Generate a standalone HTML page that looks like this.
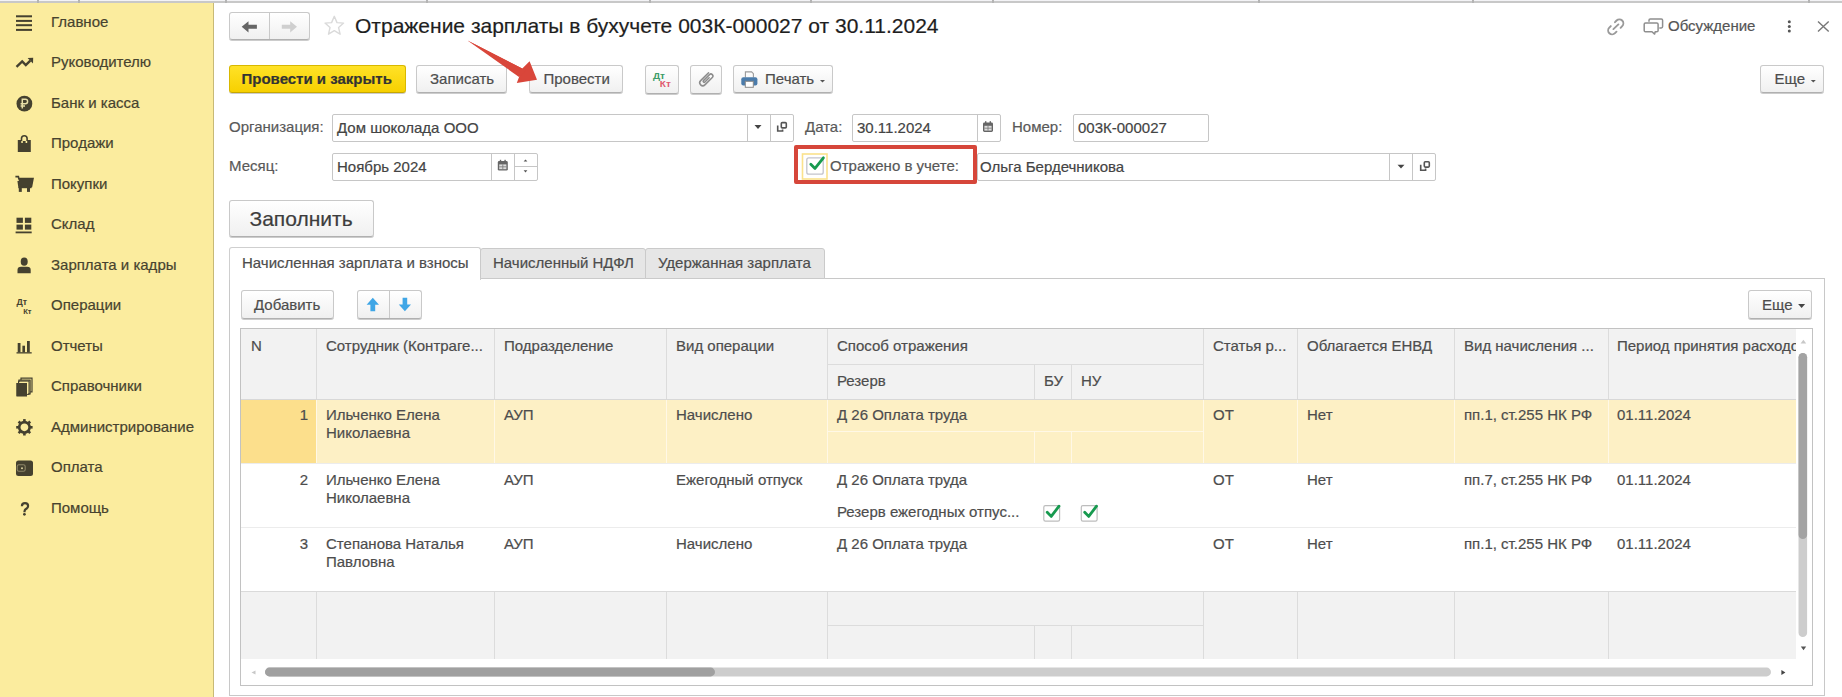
<!DOCTYPE html><html><head><meta charset="utf-8"><style>
*{box-sizing:border-box;margin:0;padding:0}
html,body{width:1842px;height:697px;overflow:hidden;background:#fff;font-family:"Liberation Sans",sans-serif;font-size:15px;color:#4d4d4d}
.a{position:absolute}
.t{position:absolute;white-space:nowrap;line-height:18px;font-size:15px}
.tick{position:absolute;top:0;width:2px;height:3px;background:#b4b4b4}
.si{position:absolute;left:51px;color:#47432f;font-size:15px;line-height:18px;white-space:nowrap}
.btn{position:absolute;border:1px solid #c9c9c9;border-bottom-color:#b0b0b0;border-radius:3px;background:linear-gradient(#ffffff,#f0f0f0);box-shadow:0 1px 0 rgba(0,0,0,.20);color:#4d4d4d;font-size:15px;white-space:nowrap}
.inp{position:absolute;border:1px solid #c6c6c6;border-radius:2px;background:#fff}
.lbl{position:absolute;color:#595959;font-size:15px;line-height:18px;white-space:nowrap}
.txt{position:absolute;color:#444;font-size:15px;line-height:18px;white-space:nowrap}
.vd{position:absolute;width:1px}
.hd{position:absolute;height:1px}
svg{position:absolute;overflow:visible}
div{-webkit-text-stroke:0.2px currentColor}
</style></head><body>
<div class="a" style="left:0;top:0;width:1842px;height:1px;background:#f3f3f6"></div>
<div class="a" style="left:0;top:1px;width:1842px;height:2px;background:#c8c8c8"></div>
<div class="tick" style="left:37px"></div>
<div class="tick" style="left:78px"></div>
<div class="tick" style="left:225px"></div>
<div class="tick" style="left:426px"></div>
<div class="tick" style="left:649px"></div>
<div class="tick" style="left:810px"></div>
<div class="tick" style="left:992px"></div>
<div class="tick" style="left:1258px"></div>
<div class="tick" style="left:1472px"></div>
<div class="tick" style="left:1808px"></div>
<div class="a" style="left:0;top:3px;width:213px;height:694px;background:#fbec9e"></div>
<div class="a" style="left:213px;top:3px;width:1px;height:694px;background:#c8ba76"></div>
<div class="si" style="top:13px">Главное</div>
<div class="si" style="top:53px">Руководителю</div>
<div class="si" style="top:94px">Банк и касса</div>
<div class="si" style="top:134px">Продажи</div>
<div class="si" style="top:175px">Покупки</div>
<div class="si" style="top:215px">Склад</div>
<div class="si" style="top:256px">Зарплата и кадры</div>
<div class="si" style="top:296px">Операции</div>
<div class="si" style="top:337px">Отчеты</div>
<div class="si" style="top:377px">Справочники</div>
<div class="si" style="top:418px">Администрирование</div>
<div class="si" style="top:458px">Оплата</div>
<div class="si" style="top:499px">Помощь</div>
<svg style="left:0;top:0" width="214" height="697" viewBox="0 0 214 697">
<g fill="#45412f">
<rect x="16" y="15.3" width="16" height="2"/><rect x="16" y="19.9" width="16" height="2"/><rect x="16" y="24.2" width="16" height="2"/><rect x="16" y="28.9" width="16" height="2"/>
</g>
<polyline points="16.5,66.9 22.2,61.5 25.8,65.1 30.3,60.6" fill="none" stroke="#45412f" stroke-width="2.4" stroke-linejoin="miter"/>
<polygon points="27.6,58 33.2,57.8 33,63.4" fill="#45412f"/>
<circle cx="24.4" cy="103.7" r="7.9" fill="#45412f"/>
<path d="M22.3,108.5 V99.3 H25.4 A2.2,2.2 0 0 1 25.4,103.7 H20.6 M20.6,105.9 H25" fill="none" stroke="#e8dfa8" stroke-width="1.5"/>
<path d="M17.8,140 H21.3 V143 H22.8 V141 H25.6 V143 H27.2 V140 H30.8 V152 H17.8 Z" fill="#45412f"/>
<path d="M21.5,141 V138.5 A2.8,2.8 0 0 1 27.1,138.5 V141" fill="none" stroke="#45412f" stroke-width="1.6"/>
<path d="M15.4,176.6 H18.4 L18.8,178.6 H33 L31.5,186.5 H19 L18.2,181" fill="none" stroke="#45412f" stroke-width="1.6"/>
<path d="M18.6,178.6 H33 L31.5,186.5 H19.2 Z" fill="#45412f"/>
<rect x="18.3" y="187" width="13.2" height="1.2" fill="#45412f"/>
<rect x="18.8" y="188" width="3" height="3.9" fill="#45412f"/><rect x="27" y="188" width="3" height="3.9" fill="#45412f"/>
<g fill="#45412f"><rect x="16.5" y="217.7" width="6.4" height="5.2"/><rect x="24.9" y="217.7" width="6.4" height="5.2"/><rect x="16.5" y="224.6" width="6.4" height="5"/><rect x="24.9" y="224.6" width="6.4" height="5"/><rect x="15.6" y="231.5" width="16.1" height="1.8"/></g>
<ellipse cx="24.2" cy="261.7" rx="3.5" ry="4.1" fill="#45412f"/>
<path d="M17.5,273.2 V270 Q17.5,266.8 21,266.8 H27.2 Q30.7,266.8 30.7,270 V273.2 Z" fill="#45412f"/>
<text x="16.4" y="304.6" font-family="Liberation Sans" font-weight="bold" font-size="8.8" fill="#45412f">Дт</text>
<text x="23.2" y="314.2" font-family="Liberation Sans" font-weight="bold" font-size="8" fill="#45412f" textLength="8.4" lengthAdjust="spacingAndGlyphs">Кт</text>
<g fill="#45412f"><rect x="17.7" y="343" width="2.8" height="9.4"/><rect x="22.4" y="345.7" width="2.6" height="6.7"/><rect x="27" y="341" width="2.8" height="11.4"/><rect x="16.5" y="352.2" width="15.2" height="1.3"/></g>
<g fill="none" stroke="#45412f" stroke-width="1.2"><path d="M19,382.3 V380.1 H30.1 V393.8 H28.2"/><path d="M21,380.3 V378.2 H32 V391.8 H30.2"/></g>
<rect x="16.5" y="383" width="10.5" height="13.3" fill="#45412f"/>
<rect x="18.5" y="381.1" width="10.5" height="13.3" fill="none" stroke="#45412f" stroke-width="1"/>
<rect x="16.5" y="383" width="10.5" height="13.3" fill="#45412f"/>
<g transform="translate(24.4,427.3)">
<circle r="5.2" fill="none" stroke="#45412f" stroke-width="2.6"/>
<g fill="#45412f">
<rect x="-1.3" y="-8.2" width="2.6" height="3.5"/><rect x="-1.3" y="4.7" width="2.6" height="3.5"/>
<rect x="-8.2" y="-1.3" width="3.5" height="2.6"/><rect x="4.7" y="-1.3" width="3.5" height="2.6"/>
<g transform="rotate(45)"><rect x="-1.3" y="-8.2" width="2.6" height="3.5"/><rect x="-1.3" y="4.7" width="2.6" height="3.5"/><rect x="-8.2" y="-1.3" width="3.5" height="2.6"/><rect x="4.7" y="-1.3" width="3.5" height="2.6"/></g>
</g></g>
<rect x="16" y="460.5" width="17" height="15.5" rx="2.5" fill="#45412f"/>
<rect x="17.2" y="464.8" width="8" height="6.4" rx="1.8" fill="none" stroke="#8d8668" stroke-width="1.1"/>
<circle cx="22" cy="468.3" r="1" fill="#d8d0a0"/>
<path d="M21.9,506.2 Q21.9,503.1 25,503.1 Q28.1,503.1 28.1,506 Q28.1,507.7 26.3,508.7 Q24.5,509.7 24.5,511.6 V512.2" fill="none" stroke="#45412f" stroke-width="2.2"/><circle cx="24.4" cy="514.3" r="1.4" fill="#45412f"/>
</svg>
<div class="btn" style="left:229px;top:12px;width:81px;height:28px"></div>
<div class="a" style="left:269px;top:13px;width:1px;height:26px;background:#c9c9c9"></div>
<svg style="left:0;top:0" width="1842" height="100" viewBox="0 0 1842 100">
<path d="M241.7,26.8 L248.5,21.3 V24.8 H256.9 V28.8 H248.5 V32.4 Z" fill="#666"/>
<path d="M297,26.8 L290.2,21.3 V24.8 H281.8 V28.8 H290.2 V32.4 Z" fill="#cfcfcf"/>
<path d="M334.3,16.3 L337,22.6 L343.6,23.1 L338.6,27.6 L340.1,34.2 L334.3,30.7 L328.5,34.2 L330,27.6 L325,23.1 L331.6,22.6 Z" fill="none" stroke="#dadada" stroke-width="1.4" stroke-linejoin="round"/>
</svg>
<div class="t" style="left:355px;top:14px;font-size:21px;line-height:24px;color:#1e1e1e">Отражение зарплаты в бухучете 003К-000027 от 30.11.2024</div>
<svg style="left:0;top:0" width="1842" height="60" viewBox="0 0 1842 60">
<g fill="none" stroke="#9a9a9a" stroke-width="1.9" stroke-linecap="round">
<path d="M1615,22.2 L1616.6,20.5 A3.96,3.96 0 0 1 1622.2,26.1 L1620.6,27.8"/>
<path d="M1610.8,26.1 L1609.3,27.6 A3.96,3.96 0 0 0 1615,33.2 L1616.5,31.7"/>
<path d="M1613.4,29.1 L1618.4,24.4"/>
</g>
<g fill="none" stroke="#8f8f8f" stroke-width="1.5" stroke-linejoin="round">
<path d="M1649,21.8 V20.2 Q1649,18.9 1650.3,18.9 H1661.3 Q1662.6,18.9 1662.6,20.2 V26.6 Q1662.6,27.9 1661.3,27.9 H1659.3"/>
<path d="M1645.5,22.9 H1656.8 Q1658.1,22.9 1658.1,24.2 V30.4 Q1658.1,31.7 1656.8,31.7 H1655.2 L1654.6,34.1 L1652,31.7 H1645.5 Q1644.2,31.7 1644.2,30.4 V24.2 Q1644.2,22.9 1645.5,22.9 Z" fill="#fff"/>
</g>
<g fill="#555"><circle cx="1789.3" cy="21.8" r="1.5"/><circle cx="1789.3" cy="26.5" r="1.5"/><circle cx="1789.3" cy="31.1" r="1.5"/></g>
<path d="M1818,21.5 L1828.7,31.6 M1828.7,21.5 L1818,31.6" stroke="#777" stroke-width="1.4"/>
</svg>
<div class="t" style="left:1668px;top:17px;color:#555">Обсуждение</div>
<div class="btn" style="left:229px;top:65px;width:177px;height:28px;background:linear-gradient(#ffe227,#f7d000);border-color:#d8b800;border-bottom-color:#c7a700;font-weight:bold;color:#333;padding-left:11.5px;line-height:26px">Провести и закрыть</div>
<div class="btn" style="left:416px;top:65px;width:91px;height:28px;padding-left:13px;line-height:26px">Записать</div>
<div class="btn" style="left:529px;top:65px;width:94px;height:28px;padding-left:13.5px;line-height:26px">Провести</div>
<div class="btn" style="left:645px;top:65px;width:34px;height:29px"></div>
<div class="btn" style="left:690px;top:65px;width:32px;height:29px"></div>
<div class="btn" style="left:733px;top:65px;width:100px;height:28px;padding-left:31px;line-height:26px">Печать</div>
<div class="btn" style="left:1760px;top:65px;width:64px;height:28px;padding-left:13.5px;line-height:26px">Еще</div>
<svg style="left:0;top:0" width="1842" height="100" viewBox="0 0 1842 100">
<text x="653" y="78.6" font-family="Liberation Sans" font-weight="bold" font-size="8.8" fill="#3c9c68" textLength="12" lengthAdjust="spacingAndGlyphs">Дт</text>
<text x="659.8" y="87.4" font-family="Liberation Sans" font-weight="bold" font-size="8.6" fill="#e05a70" textLength="11" lengthAdjust="spacingAndGlyphs">Кт</text>
<path transform="translate(706.3,79.2) rotate(-45)" d="M6.2,-3 L-5,-3 A3,3 0 0 0 -5,3 L5.5,3 A2,2 0 0 0 5.5,-1 L-3,-1 A1,1 0 0 0 -3,1 L3,1" fill="none" stroke="#8c8c8c" stroke-width="1.5" stroke-linecap="round"/>
<path d="M745.4,77.5 V71.9 H751.6 L753.4,73.7 V77.5" fill="none" stroke="#9a9a9a" stroke-width="1.1"/>
<rect x="741.3" y="77.3" width="16.1" height="8.3" rx="2" fill="#4b7cab"/>
<rect x="745.3" y="81.3" width="8" height="6" fill="#fff" stroke="#8a8a8a" stroke-width="1"/>
<path d="M820,79.9 H825 L822.5,82.4 Z" fill="#555"/>
<path d="M1810.8,79.9 H1815.8 L1813.3,82.4 Z" fill="#555"/>
</svg>
<svg style="left:0;top:0" width="1842" height="120" viewBox="0 0 1842 120">
<path d="M467.5,40.5 L522.3,68.6 L529.6,61.2 L537,79.8 L516.8,83 L520.5,73.2 Z" fill="#d9463a"/>
<path d="M467.5,40.5 L526,70.5 L519,77 Z" fill="#d9463a"/>
</svg>
<div class="lbl" style="left:229px;top:118px">Организация:</div>
<div class="inp" style="left:332px;top:114px;width:462px;height:28px"></div>
<div class="vd" style="left:747px;top:115px;height:26px;background:#c6c6c6"></div>
<div class="vd" style="left:770px;top:115px;height:26px;background:#c6c6c6"></div>
<div class="txt" style="left:337px;top:119px">Дом шоколада ООО</div>
<div class="lbl" style="left:805px;top:118px">Дата:</div>
<div class="inp" style="left:852px;top:114px;width:149px;height:28px"></div>
<div class="vd" style="left:977px;top:115px;height:26px;background:#c6c6c6"></div>
<div class="txt" style="left:857px;top:119px">30.11.2024</div>
<div class="lbl" style="left:1012px;top:118px">Номер:</div>
<div class="inp" style="left:1073px;top:114px;width:136px;height:28px"></div>
<div class="txt" style="left:1078px;top:119px">003К-000027</div>
<div class="lbl" style="left:229px;top:157px">Месяц:</div>
<div class="inp" style="left:332px;top:153px;width:206px;height:28px"></div>
<div class="vd" style="left:491px;top:154px;height:26px;background:#c6c6c6"></div>
<div class="vd" style="left:514px;top:154px;height:26px;background:#c6c6c6"></div>
<div class="a" style="left:515px;top:166px;width:22px;height:1px;background:#c6c6c6"></div>
<div class="txt" style="left:337px;top:158px">Ноябрь 2024</div>
<div class="inp" style="left:977px;top:153px;width:459px;height:28px"></div>
<div class="vd" style="left:1389px;top:154px;height:26px;background:#c6c6c6"></div>
<div class="vd" style="left:1412px;top:154px;height:26px;background:#c6c6c6"></div>
<div class="txt" style="left:980px;top:158px">Ольга Бердечникова</div>
<div class="a" style="left:794px;top:145px;width:183px;height:39px;border:4px solid #d6463a;border-radius:2px"></div>
<div class="lbl" style="left:830px;top:157px;color:#575757">Отражено в учете:</div>
<svg style="left:0;top:0" width="1842" height="200" viewBox="0 0 1842 200"><path d="M754.5,125.1 H761.5 L758,128.9 Z" fill="#444"/><rect x="781.3000000000001" y="122.60000000000001" width="5" height="5.3" rx="1" fill="none" stroke="#555" stroke-width="1.6"/><path d="M777.7,125.60000000000001 V131.0 H782.6 V129.4" fill="none" stroke="#555" stroke-width="1.6"/><rect x="983" y="122.4" width="10" height="9.6" rx="1.4" fill="#666"/><rect x="984.4" y="125.8" width="7.2" height="4.8" fill="#ddd"/><path d="M984.4,128.2 H991.6 M988,125.8 V130.6" stroke="#777" stroke-width="0.8"/><rect x="985" y="121.2" width="1.4" height="2.2" fill="#666"/><rect x="989.6" y="121.2" width="1.4" height="2.2" fill="#666"/><rect x="497.8" y="161.0" width="10" height="9.6" rx="1.4" fill="#666"/><rect x="499.2" y="164.4" width="7.2" height="4.8" fill="#ddd"/><path d="M499.2,166.8 H506.40000000000003 M502.8,164.4 V169.20000000000002" stroke="#777" stroke-width="0.8"/><rect x="499.8" y="159.8" width="1.4" height="2.2" fill="#666"/><rect x="504.40000000000003" y="159.8" width="1.4" height="2.2" fill="#666"/><path d="M523.6,161.6 H527.4 L525.5,159.4 Z" fill="#555"/><path d="M523.6,170.2 H527.4 L525.5,172.4 Z" fill="#555"/><path d="M1397.5,164.7 H1404.5 L1401,168.5 Z" fill="#444"/><rect x="1424.3" y="161.79999999999998" width="5" height="5.3" rx="1" fill="none" stroke="#555" stroke-width="1.6"/><path d="M1420.7,164.79999999999998 V170.2 H1425.6000000000001 V168.6" fill="none" stroke="#555" stroke-width="1.6"/><rect x="802.5" y="154" width="24.5" height="25" fill="none" stroke="#fbe28c" stroke-width="1.6"/><rect x="806.8" y="157.8" width="16.4" height="16.4" rx="2" fill="#fff" stroke="#c4c4cc" stroke-width="1.3"/><path d="M810.8,164.2 L815,168.4 L823.4,157.8" fill="none" stroke="#179a4f" stroke-width="2.8" stroke-linecap="round" stroke-linejoin="round"/></svg>
<div class="btn" style="left:229px;top:200px;width:145px;height:37px;font-size:21px;line-height:35px;padding-left:19.5px;color:#3d3d3d">Заполнить</div>
<div class="a" style="left:229px;top:278px;width:1596px;height:418px;border:1px solid #c8c8c8"></div>
<div class="a" style="left:229px;top:247px;width:252px;height:33px;border:1px solid #cfcfcf;border-bottom:none;background:#fff;border-radius:3px 3px 0 0"></div>
<div class="t" style="left:242px;top:254px">Начисленная зарплата и взносы</div>
<div class="a" style="left:480px;top:248px;width:166px;height:31px;border:1px solid #cacaca;background:#e6e6e6;border-radius:3px 3px 0 0"></div>
<div class="t" style="left:493px;top:254px">Начисленный НДФЛ</div>
<div class="a" style="left:645px;top:248px;width:180px;height:31px;border:1px solid #cacaca;background:#e6e6e6;border-radius:3px 3px 0 0"></div>
<div class="t" style="left:658px;top:254px">Удержанная зарплата</div>
<div class="btn" style="left:241px;top:290px;width:93px;height:29px;padding-left:12px;line-height:27px">Добавить</div>
<div class="btn" style="left:357px;top:290px;width:65px;height:29px"></div>
<div class="vd" style="left:389px;top:291px;height:27px;background:#c9c9c9"></div>
<div class="btn" style="left:1748px;top:290px;width:64px;height:29px;padding-left:13px;line-height:27px">Еще</div>
<svg style="left:0;top:0" width="1842" height="330" viewBox="0 0 1842 330">
<path d="M372.8,297.8 L379,304.8 H375.2 V311.2 H370.4 V304.8 H366.6 Z" fill="#3fa6e6"/>
<path d="M404.9,311.2 L411,304.6 H407.2 V297.8 H402.6 V304.6 H398.8 Z" fill="#3fa6e6"/>
<path d="M1798.1,304.1 H1805.1 L1801.6,307.9 Z" fill="#444"/></svg>
<div class="a" style="left:240px;top:328px;width:1573px;height:358px;border:1px solid #c2c2c2;background:#fff"></div>
<div class="a" style="left:241px;top:329px;width:1555px;height:70px;background:#f2f2f2"></div>
<div class="vd" style="left:316px;top:329px;height:70px;background:#dcdcdc"></div>
<div class="vd" style="left:494px;top:329px;height:70px;background:#dcdcdc"></div>
<div class="vd" style="left:666px;top:329px;height:70px;background:#dcdcdc"></div>
<div class="vd" style="left:827px;top:329px;height:70px;background:#dcdcdc"></div>
<div class="vd" style="left:1203px;top:329px;height:70px;background:#dcdcdc"></div>
<div class="vd" style="left:1297px;top:329px;height:70px;background:#dcdcdc"></div>
<div class="vd" style="left:1454px;top:329px;height:70px;background:#dcdcdc"></div>
<div class="vd" style="left:1608px;top:329px;height:70px;background:#dcdcdc"></div>
<div class="hd" style="left:827px;top:364px;width:376px;background:#dcdcdc"></div>
<div class="vd" style="left:1034px;top:365px;height:34px;background:#dcdcdc"></div>
<div class="vd" style="left:1071px;top:365px;height:34px;background:#dcdcdc"></div>
<div class="hd" style="left:241px;top:399px;width:1555px;background:#d8d8d8"></div>
<div class="a" style="left:241px;top:400px;width:1555px;height:63px;background:#fdf0c5"></div>
<div class="a" style="left:241px;top:400px;width:75px;height:63px;background:#fcdf8c"></div>
<div class="vd" style="left:316px;top:400px;height:63px;background:#fff8e6"></div>
<div class="vd" style="left:494px;top:400px;height:63px;background:#fff8e6"></div>
<div class="vd" style="left:666px;top:400px;height:63px;background:#fff8e6"></div>
<div class="vd" style="left:827px;top:400px;height:63px;background:#fff8e6"></div>
<div class="vd" style="left:1203px;top:400px;height:63px;background:#fff8e6"></div>
<div class="vd" style="left:1297px;top:400px;height:63px;background:#fff8e6"></div>
<div class="vd" style="left:1454px;top:400px;height:63px;background:#fff8e6"></div>
<div class="vd" style="left:1608px;top:400px;height:63px;background:#fff8e6"></div>
<div class="hd" style="left:827px;top:431px;width:376px;background:#fff8e6"></div>
<div class="vd" style="left:1034px;top:432px;height:31px;background:#fff8e6"></div>
<div class="vd" style="left:1071px;top:432px;height:31px;background:#fff8e6"></div>
<div class="hd" style="left:241px;top:463px;width:1555px;background:#ececec"></div>
<div class="hd" style="left:241px;top:527px;width:1555px;background:#ececec"></div>
<div class="hd" style="left:241px;top:591px;width:1555px;background:#dadada"></div>
<div class="a" style="left:241px;top:592px;width:1555px;height:67px;background:#f2f2f2"></div>
<div class="vd" style="left:316px;top:592px;height:67px;background:#dcdcdc"></div>
<div class="vd" style="left:494px;top:592px;height:67px;background:#dcdcdc"></div>
<div class="vd" style="left:666px;top:592px;height:67px;background:#dcdcdc"></div>
<div class="vd" style="left:827px;top:592px;height:67px;background:#dcdcdc"></div>
<div class="vd" style="left:1203px;top:592px;height:67px;background:#dcdcdc"></div>
<div class="vd" style="left:1297px;top:592px;height:67px;background:#dcdcdc"></div>
<div class="vd" style="left:1454px;top:592px;height:67px;background:#dcdcdc"></div>
<div class="vd" style="left:1608px;top:592px;height:67px;background:#dcdcdc"></div>
<div class="hd" style="left:827px;top:625px;width:376px;background:#dcdcdc"></div>
<div class="vd" style="left:1034px;top:626px;height:33px;background:#dcdcdc"></div>
<div class="vd" style="left:1071px;top:626px;height:33px;background:#dcdcdc"></div>
<div class="txt" style="left:251px;top:337px;color:#4d4d4d;">N</div>
<div class="txt" style="left:326px;top:337px;color:#4d4d4d;">Сотрудник (Контраге...</div>
<div class="txt" style="left:504px;top:337px;color:#4d4d4d;">Подразделение</div>
<div class="txt" style="left:676px;top:337px;color:#4d4d4d;">Вид операции</div>
<div class="txt" style="left:837px;top:337px;color:#4d4d4d;">Способ отражения</div>
<div class="txt" style="left:1213px;top:337px;color:#4d4d4d;">Статья р...</div>
<div class="txt" style="left:1307px;top:337px;color:#4d4d4d;">Облагается ЕНВД</div>
<div class="txt" style="left:1464px;top:337px;color:#4d4d4d;">Вид начисления ...</div>
<div class="a" style="left:1617px;top:337px;width:179px;height:20px;overflow:hidden"><div class="txt" style="left:0;top:0;color:#4d4d4d">Период принятия расходов</div></div>
<div class="txt" style="left:837px;top:372px;color:#4d4d4d;">Резерв</div>
<div class="txt" style="left:1044px;top:372px;color:#4d4d4d;">БУ</div>
<div class="txt" style="left:1081px;top:372px;color:#4d4d4d;">НУ</div>
<div class="txt" style="left:251px;top:406px;width:57px;text-align:right;color:#4d4d4d">1</div>
<div class="txt" style="left:326px;top:406px;color:#4d4d4d;">Ильченко Елена</div>
<div class="txt" style="left:326px;top:424px;color:#4d4d4d;">Николаевна</div>
<div class="txt" style="left:504px;top:406px;color:#4d4d4d;">АУП</div>
<div class="txt" style="left:676px;top:406px;color:#4d4d4d;">Начислено</div>
<div class="txt" style="left:837px;top:406px;color:#4d4d4d;">Д 26 Оплата труда</div>
<div class="txt" style="left:1213px;top:406px;color:#4d4d4d;">ОТ</div>
<div class="txt" style="left:1307px;top:406px;color:#4d4d4d;">Нет</div>
<div class="txt" style="left:1464px;top:406px;color:#4d4d4d;">пп.1, ст.255 НК РФ</div>
<div class="txt" style="left:1617px;top:406px;color:#4d4d4d;">01.11.2024</div>
<div class="txt" style="left:251px;top:471px;width:57px;text-align:right;color:#4d4d4d">2</div>
<div class="txt" style="left:326px;top:471px;color:#4d4d4d;">Ильченко Елена</div>
<div class="txt" style="left:326px;top:489px;color:#4d4d4d;">Николаевна</div>
<div class="txt" style="left:504px;top:471px;color:#4d4d4d;">АУП</div>
<div class="txt" style="left:676px;top:471px;color:#4d4d4d;">Ежегодный отпуск</div>
<div class="txt" style="left:837px;top:471px;color:#4d4d4d;">Д 26 Оплата труда</div>
<div class="txt" style="left:1213px;top:471px;color:#4d4d4d;">ОТ</div>
<div class="txt" style="left:1307px;top:471px;color:#4d4d4d;">Нет</div>
<div class="txt" style="left:1464px;top:471px;color:#4d4d4d;">пп.7, ст.255 НК РФ</div>
<div class="txt" style="left:1617px;top:471px;color:#4d4d4d;">01.11.2024</div>
<div class="txt" style="left:251px;top:535px;width:57px;text-align:right;color:#4d4d4d">3</div>
<div class="txt" style="left:326px;top:535px;color:#4d4d4d;">Степанова Наталья</div>
<div class="txt" style="left:326px;top:553px;color:#4d4d4d;">Павловна</div>
<div class="txt" style="left:504px;top:535px;color:#4d4d4d;">АУП</div>
<div class="txt" style="left:676px;top:535px;color:#4d4d4d;">Начислено</div>
<div class="txt" style="left:837px;top:535px;color:#4d4d4d;">Д 26 Оплата труда</div>
<div class="txt" style="left:1213px;top:535px;color:#4d4d4d;">ОТ</div>
<div class="txt" style="left:1307px;top:535px;color:#4d4d4d;">Нет</div>
<div class="txt" style="left:1464px;top:535px;color:#4d4d4d;">пп.1, ст.255 НК РФ</div>
<div class="txt" style="left:1617px;top:535px;color:#4d4d4d;">01.11.2024</div>
<div class="txt" style="left:837px;top:503px;color:#4d4d4d;">Резерв ежегодных отпус...</div>
<svg style="left:0;top:0" width="1842" height="697" viewBox="0 0 1842 697"><rect x="1043.8" y="505.6" width="15.8" height="15.6" rx="1.6" fill="#fff" stroke="#bdbdbd" stroke-width="1.2"/><path d="M1047.2,512.2 L1051.2,516.4 L1059.0,506.2" fill="none" stroke="#179a4f" stroke-width="2.8" stroke-linecap="round" stroke-linejoin="round"/><rect x="1081.3" y="505.6" width="15.8" height="15.6" rx="1.6" fill="#fff" stroke="#bdbdbd" stroke-width="1.2"/><path d="M1084.7,512.2 L1088.7,516.4 L1096.5,506.2" fill="none" stroke="#179a4f" stroke-width="2.8" stroke-linecap="round" stroke-linejoin="round"/><path d="M1800.6,343.5 H1806.2 L1803.4,339.8 Z" fill="#c8c8c8"/><rect x="1798.5" y="353" width="8.6" height="284" rx="4.3" fill="#cdcdcd"/><rect x="1798.5" y="353" width="8.6" height="186" rx="4.3" fill="#a3a3a3"/><path d="M1800.8,646.6 H1806.2 L1803.5,650.2 Z" fill="#555"/><path d="M251.5,672.5 L255.5,670.5 V674.5 Z" fill="#c8c8c8"/><rect x="265" y="667.6" width="1506" height="8.8" rx="4.4" fill="#cdcdcd"/><rect x="265" y="667.6" width="450" height="8.8" rx="4.4" fill="#a0a0a0"/><path d="M1781.4,670 L1785.4,672.5 L1781.4,675 Z" fill="#444"/></svg>
</body></html>
